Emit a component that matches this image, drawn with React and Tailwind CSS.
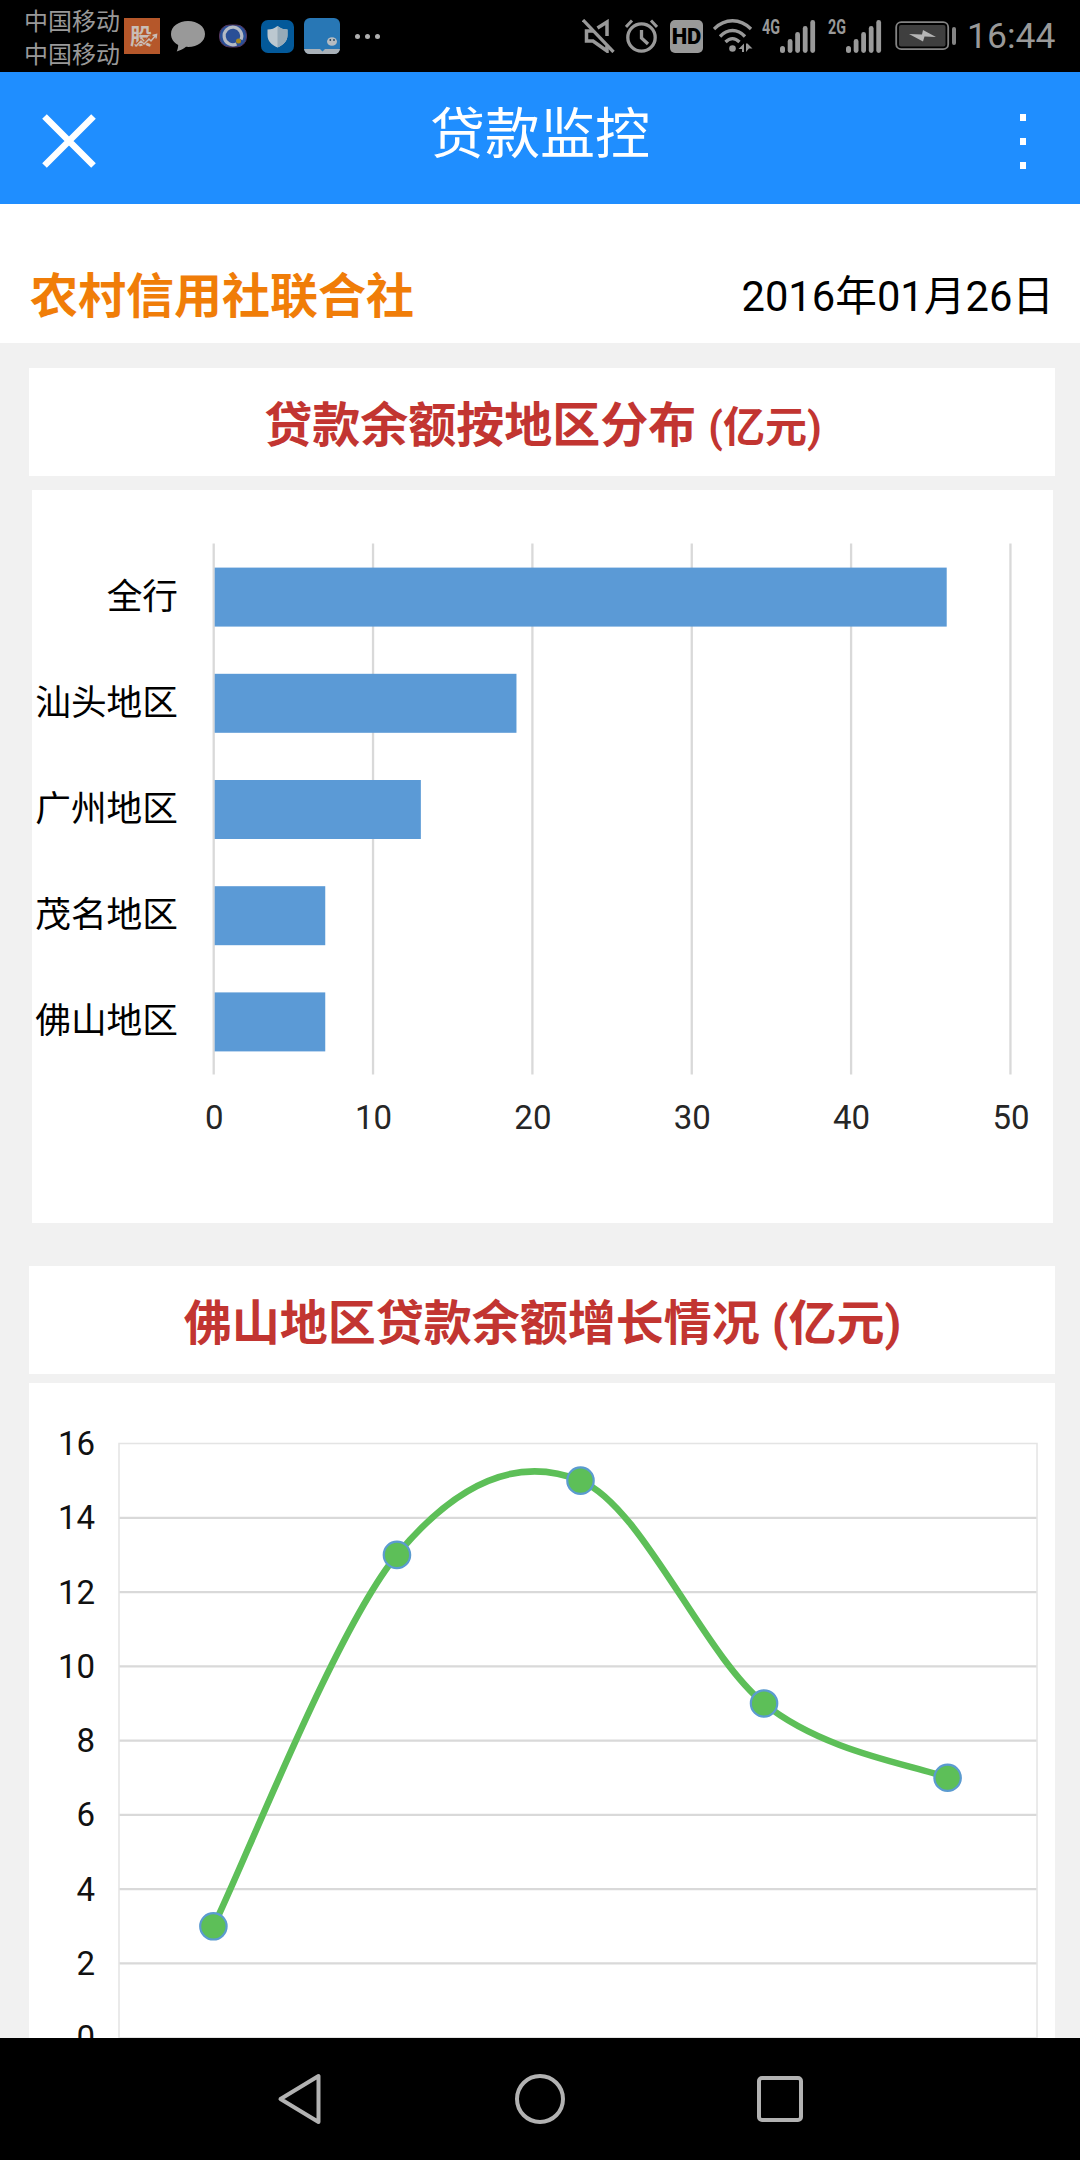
const regions = [
  { name: '全行', value: 46 },
  { name: '汕头地区', value: 19 },
  { name: '广州地区', value: 13 },
  { name: '茂名地区', value: 7 },
  { name: '佛山地区', value: 7 },
]

const growth = [3, 13, 15, 9, 7]

function SignalIcon({ label }) {
  return (
    <svg width="54" height="36" viewBox="0 0 54 36" fill="#999999">
      <text x="0" y="16" fontSize="19.5" fontWeight="700" textLength="18" lengthAdjust="spacingAndGlyphs">{label}</text>
      <rect x="18" y="28" width="5" height="7" rx="2.5" />
      <rect x="25.7" y="21" width="4.8" height="14" rx="2.4" />
      <rect x="33.2" y="14" width="4.8" height="21" rx="2.4" />
      <rect x="40.8" y="8" width="4.8" height="27" rx="2.4" />
      <rect x="48.3" y="2" width="4.8" height="33" rx="2.4" />
    </svg>
  )
}

function StatusBar() {
  return (
    <div className="flex h-[72px] items-center bg-black pl-6 text-[#999999]">
      <div className="flex w-[100px] flex-col pt-[5px] text-2xl leading-[33px]">
        <span>中国移动</span>
        <span>中国移动</span>
      </div>
      <svg width="36" height="36" viewBox="0 0 36 36">
        <rect width="36" height="36" fill="#b5572a" />
        <text x="6" y="26" fontSize="22" fontWeight="700" fill="#c9bdb6">股</text>
        <path d="M12 27l5-4 3 3 5-6 2 4 5-7" fill="none" stroke="#b5572a" strokeWidth="3" />
        <path d="M12 28l5-5 3 3 5-5 2 2 5-6M28.500 17.500l4-1-.5 4" fill="none" stroke="#c9bdb6" strokeWidth="1.500" />
      </svg>
      <svg className="ml-[11px]" width="34" height="34" viewBox="0 0 34 34">
        <path d="M17 2C7.500 2 0 7.500 0 15c0 5 2.800 8.500 7.200 11-.1 2.500-.6 4.500-1.500 6.500 3.800-1 6.800-2.600 9.300-4.700C26 28.600 34 23 34 15 34 7.500 26.500 2 17 2z" fill="#999999" />
      </svg>
      <svg className="ml-[14px]" width="28" height="24" viewBox="0 0 28 24">
        <rect x="0.500" y="1" width="27" height="22" rx="10" fill="#2a4f96" stroke="#55375f" />
        <path d="M17.500 20A8.800 8.800 0 1 1 22 15.500" fill="none" stroke="#b4bac4" strokeWidth="3.200" />
        <circle cx="19.500" cy="17" r="2.500" fill="#a8891c" />
      </svg>
      <svg className="ml-[14px]" width="33" height="33" viewBox="0 0 33 33">
        <rect width="33" height="33" rx="7" fill="#03599a" />
        <path d="M16.500 6c3 2.500 6 3.500 10 3.500V15c0 6-4 10-10 12.500C10.500 25 6.500 21 6.500 15V9.500c4 0 7-1 10-3.500z" fill="#bcc8d0" />
        <path d="M16.500 6c3 2.500 6 3.500 10 3.500V15c0 6-4 10-10 12.500z" fill="#96aab8" />
      </svg>
      <svg className="ml-[10px]" width="36" height="36" viewBox="0 0 36 36">
        <rect width="36" height="36" rx="6" fill="#2877b5" />
        <path d="M0 31h16l2.500 2.500L21 31h15a6 6 0 0 1-6 5H6a6 6 0 0 1-6-5z" fill="#a9b1b8" />
        <ellipse cx="28" cy="23.500" rx="5" ry="4.300" fill="#b6bcc1" />
        <circle cx="26.300" cy="22" r="0.900" fill="#26445c" />
        <circle cx="30" cy="22" r="0.900" fill="#26445c" />
      </svg>
      <div className="ml-[15px] flex gap-[5px]">
        <span className="size-[5px] rounded-full bg-[#b0b0b0]" />
        <span className="size-[5px] rounded-full bg-[#b0b0b0]" />
        <span className="size-[5px] rounded-full bg-[#b0b0b0]" />
      </div>

      <svg className="ml-[202px]" width="33" height="34" viewBox="0 0 33 34" fill="none" stroke="#999999" strokeWidth="3.500">
        <path d="M15.500 9L25 3v14M12 12H4.500v10H11l14 10v-5" />
        <path d="M1 1l30.500 32" strokeWidth="3.300" />
      </svg>
      <svg className="ml-[10px]" width="33" height="34" viewBox="0 0 33 34" fill="none" stroke="#999999" strokeWidth="3.300">
        <circle cx="16.500" cy="18.500" r="13.700" />
        <path d="M16.500 11v8l6.500 6" />
        <path d="M1 8l6-6.500M32 8l-6-6.500" strokeWidth="3" />
      </svg>
      <div className="ml-[12px] flex h-[33px] w-[33px] items-center justify-center rounded-[5px] bg-[#999999] font-[Roboto] text-[22px] font-black text-black">
        HD
      </div>
      <svg className="ml-[10px]" width="40" height="36" viewBox="0 0 40 36" fill="none" stroke="#999999" strokeWidth="3.300">
        <path d="M1 11c11-11 26-11 37 0M7 18.500c7.500-8 17.500-8 25 0M12.500 24c4.500-4.500 9.500-4.500 14 0" />
        <circle cx="19.500" cy="30.500" r="3.300" fill="#999999" stroke="none" />
        <path d="M25.500 31l5.500-5.500V34h-2v-3zM33 25.500h1.500l5 5h-3.500L33 34z" fill="#999999" stroke="none" />
      </svg>
      <div className="ml-[9px]"><SignalIcon label="4G" /></div>
      <div className="ml-[12px]"><SignalIcon label="2G" /></div>
      <svg className="ml-[13px]" width="62" height="30" viewBox="0 0 62 30">
        <rect x="1.200" y="1.200" width="52" height="27" rx="5" fill="none" stroke="#848484" strokeWidth="1.800" />
        <rect x="4" y="4" width="46.500" height="21.500" rx="2" fill="#3f3f3f" />
        <rect x="57" y="6" width="4" height="18" rx="2" fill="#848484" />
        <path d="M14 13l13 .5 1-4.500 13 7-11.500-.5-1.500 5z" fill="#b5b5b5" />
      </svg>
      <span className="ml-[10px] pt-[2px] font-[Roboto] text-[35.5px] leading-none">16:44</span>
    </div>
  )
}

function Header() {
  return (
    <div className="flex h-[132px] items-center justify-between bg-[#1f8eff] pr-[54px] pl-[42px] text-white">
      <svg className="mt-[6px]" width="54" height="54" viewBox="0 0 54 54" stroke="white" strokeWidth="6.500">
        <path d="M2.500 2.500l49 49M51.500 2.500l-49 49" />
      </svg>
      <h1 className="ml-[-36px] pb-[8px] text-[55px] leading-none font-normal">贷款监控</h1>
      <div className="mt-[6px] flex flex-col gap-[17px]">
        <span className="h-[7px] w-[6px] bg-white" />
        <span className="h-[7px] w-[6px] bg-white" />
        <span className="h-[7px] w-[6px] bg-white" />
      </div>
    </div>
  )
}

function BarChart() {
  const left = 181.7
  const step = 159.35
  return (
    <svg width="1021" height="733" viewBox="0 0 1021 733">
      {[0, 10, 20, 30, 40, 50].map((tick, i) => (
        <g key={tick}>
          <line x1={left + i * step} x2={left + i * step} y1="53.500" y2="584.500" stroke="#d9d9d9" strokeWidth="2.300" />
          <text x={left + i * step + 0.5} y="639" textAnchor="middle" fontSize="33" fill="#262626">{tick}</text>
        </g>
      ))}
      {regions.map((r, i) => (
        <g key={r.name}>
          <rect
            x={left + 1}
            y={77.6 + i * 106.2}
            width={(r.value * step) / 10 - 1}
            height="59"
            fill="#5b9ad6"
          />
          <text x="146" y={118.5 + i * 106.2} textAnchor="end" fontSize="35.700" fill="black">{r.name}</text>
        </g>
      ))}
    </svg>
  )
}

function LineChart() {
  const top = 60.5
  const unit = 37.14
  const points = growth.map((v, i) => [184.4 + i * 183.55, top + (16 - v) * unit])

  // Catmull-Rom spline through the points
  let path = `M${points[0][0]} ${points[0][1]}`
  for (let i = 0; i < points.length - 1; i++) {
    const p0 = points[i - 1] || points[i]
    const p1 = points[i]
    const p2 = points[i + 1]
    const p3 = points[i + 2] || p2
    path += `C${p1[0] + (p2[0] - p0[0]) / 6} ${p1[1] + (p2[1] - p0[1]) / 6} ${p2[0] - (p3[0] - p1[0]) / 6} ${p2[1] - (p3[1] - p1[1]) / 6} ${p2[0]} ${p2[1]}`
  }

  return (
    <svg width="1026" height="655" viewBox="0 0 1026 655">
      {[16, 14, 12, 10, 8, 6, 4, 2, 0].map((tick) => (
        <text key={tick} x="66" y={top + (16 - tick) * unit + 11.5} textAnchor="end" fontSize="33" fill="#111111">{tick}</text>
      ))}
      {[14, 12, 10, 8, 6, 4, 2].map((tick) => (
        <line key={tick} x1="90" x2="1008" y1={top + (16 - tick) * unit} y2={top + (16 - tick) * unit} stroke="#d9d9d9" strokeWidth="2.300" />
      ))}
      <rect x="90" y={top} width="918" height={16 * unit} fill="none" stroke="#e4e4e4" strokeWidth="1.500" />
      <path d={path} fill="none" stroke="#5dbf58" strokeWidth="6.500" />
      {points.map(([x, y]) => (
        <circle key={x} cx={x} cy={y} r="13.200" fill="#5dbf58" stroke="#5b9bd0" strokeWidth="2.200" />
      ))}
    </svg>
  )
}

function NavBar() {
  return (
    <div className="flex h-[122px] items-center bg-black pl-[277px]">
      <svg width="46" height="54" viewBox="0 0 46 54" fill="none" stroke="#b2b2b2" strokeWidth="4" strokeLinejoin="round">
        <path d="M41.500 4v46L3.500 27z" />
      </svg>
      <span className="ml-[192px] size-[50px] rounded-full border-4 border-[#b2b2b2]" />
      <span className="ml-[192px] size-[46px] rounded-[5px] border-4 border-[#b2b2b2]" />
    </div>
  )
}

export default function App() {
  return (
    <div className="flex h-[2160px] w-[1080px] flex-col overflow-hidden bg-[#f1f1f1] font-[Roboto,'Noto_Sans_CJK_SC',sans-serif]">
      <StatusBar />
      <Header />
      <div className="flex h-[139px] items-center justify-between bg-white pt-[46px] pr-[26px] pl-[30px]">
        <span className="text-5xl font-bold text-[#f07d08]">农村信用社联合社</span>
        <span className="pt-[2px] text-[41.7px] text-black">2016年01月26日</span>
      </div>
      <div className="mt-[25px] mr-[25px] ml-[29px] flex h-[108px] items-center justify-center bg-white pt-2 pl-[2px] text-5xl font-bold text-[#c23531]">
        <span>贷款余额按地区分布 <span className="text-[42px]">(亿元)</span></span>
      </div>
      <div className="mt-[14px] mr-[27px] ml-8 h-[733px] shrink-0 bg-white">
        <BarChart />
      </div>
      <div className="mt-[43px] mr-[25px] ml-[29px] flex h-[108px] items-center justify-center bg-white pt-[7px] pl-px text-5xl font-bold text-[#c23531]">
        <span>佛山地区贷款余额增长情况 (亿元)</span>
      </div>
      <div className="mt-[9px] mr-[25px] ml-[29px] h-[655px] shrink-0 bg-white">
        <LineChart />
      </div>
      <NavBar />
    </div>
  )
}
